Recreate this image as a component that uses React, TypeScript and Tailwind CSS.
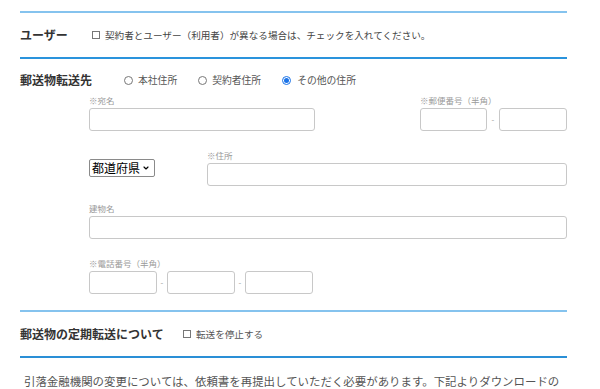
import { ChevronDown } from "lucide-react"

const jp = "font-['Noto_Sans_CJK_JP',sans-serif]"

function Box() {
  return <span className="inline-block h-[8px] w-[8px] border border-[#777] bg-white" />
}

function Radio({ checked }: { checked?: boolean }) {
  if (checked) {
    return (
      <span className="flex h-[9px] w-[9px] items-center justify-center rounded-full border border-[#1a73e8] bg-white">
        <span className="h-[5px] w-[5px] rounded-full bg-[#1a73e8]" />
      </span>
    )
  }
  return <span className="inline-block h-[9px] w-[9px] rounded-full border border-[#777] bg-white" />
}

function Hint({ text }: { text: string }) {
  return <div className="h-[10px] whitespace-nowrap text-[8.5px] leading-[10px] text-[#9a9a9a]">{text}</div>
}

function Field({ label, className }: { label: string; className?: string }) {
  return (
    <div className={className}>
      <Hint text={label} />
      <div className="mt-[3px] h-[23px] rounded-[3px] border border-[#c8c8c8] bg-white" />
    </div>
  )
}

function Split({ count }: { count: number }) {
  const cells = Array.from({ length: count })
  return (
    <div className="mt-[3px] flex items-center">
      {cells.map((_, i) => (
        <div key={i} className="flex items-center">
          {i > 0 && <span className="w-[10px] text-center text-[8px] text-[#999]">-</span>}
          <div className="h-[23px] w-[68px] rounded-[3px] border border-[#c8c8c8] bg-white" />
        </div>
      ))}
    </div>
  )
}

export default function App() {
  return (
    <div className={`${jp} h-[389px] w-[600px] overflow-hidden bg-white pt-[11px] text-[#333]`}>
      <div className="mx-[20px] w-[547px]">
        <section className="flex h-[48px] items-center border-y-2 border-t-[#85c3ee] border-b-[#2a93dc]">
          <h2 className="w-[72px] text-[12px] font-bold">ユーザー</h2>
          <label className="flex items-center gap-[5px] text-[9.6px] text-[#444]">
            <Box />
            <span>契約者とユーザー（利用者）が異なる場合は、チェックを入れてください。</span>
          </label>
        </section>

        <section className="border-b-2 border-[#85c3ee] pb-[16px] pt-[13px]">
          <div className="flex h-[16px] items-center">
            <h2 className="w-[104px] text-[12px] font-bold">郵送物転送先</h2>
            <div className="flex items-center gap-[21px] text-[9.8px] text-[#555]">
              <label className="flex items-center gap-[5px]"><Radio />本社住所</label>
              <label className="flex items-center gap-[5px]"><Radio />契約者住所</label>
              <label className="flex items-center gap-[6px]"><Radio checked />その他の住所</label>
            </div>
          </div>

          <div className="ml-[69px] mt-[7px] w-[478px]">
            <div className="flex justify-between">
              <Field label="※宛名" className="w-[226px]" />
              <div className="w-[147px]">
                <Hint text="※郵便番号（半角）" />
                <div className="mt-[3px] flex items-center">
                  <div className="h-[23px] w-[67px] rounded-[3px] border border-[#c8c8c8]" />
                  <span className="w-[12px] text-center text-[8px] text-[#999]">-</span>
                  <div className="h-[23px] w-[68px] rounded-[3px] border border-[#c8c8c8]" />
                </div>
              </div>
            </div>

            <div className="mt-[19px] flex items-center gap-[52px]">
              <div className="flex h-[18px] w-[66px] items-center justify-between whitespace-nowrap rounded-[2px] border border-[#8a8a8a] pl-[2px] pr-[4px] text-[12px] leading-none text-black">
                <span>都道府県</span>
                <ChevronDown className="h-[8px] w-[8px] shrink-0" strokeWidth={3.5} />
              </div>
              <Field label="※住所" className="flex-1" />
            </div>

            <Field label="建物名" className="mt-[17px]" />

            <div className="mt-[19px]">
              <Hint text="※電話番号（半角）" />
              <Split count={3} />
            </div>
          </div>
        </section>

        <section className="flex h-[46px] items-center border-b-2 border-[#2a8fd6]">
          <h2 className="w-[163px] text-[12px] font-bold">郵送物の定期転送について</h2>
          <label className="flex items-center gap-[5px] text-[9.6px] text-[#555]">
            <Box />
            <span>転送を停止する</span>
          </label>
        </section>

        <p className="ml-[4px] mt-[15px] whitespace-nowrap text-[11.45px] leading-[16px] text-[#555]">
          引落金融機関の変更については、依頼書を再提出していただく必要があります。下記よりダウンロードの
        </p>
      </div>
    </div>
  )
}
